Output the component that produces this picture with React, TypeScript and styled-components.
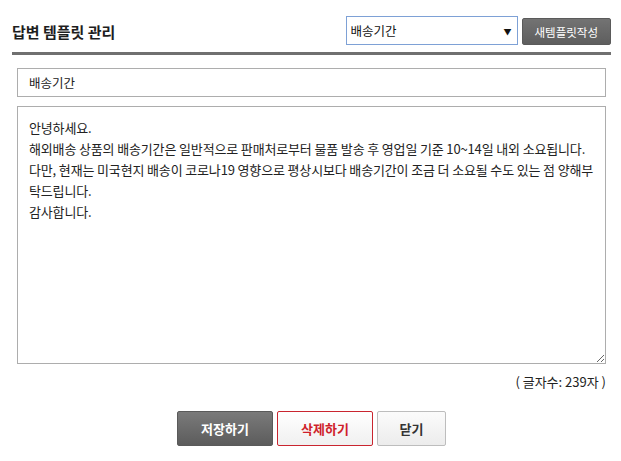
import React, { useState } from 'react';
import styled, { createGlobalStyle } from 'styled-components';

const GlobalStyle = createGlobalStyle`
  html, body {
    margin: 0;
    padding: 0;
    background: #fff;
  }
  body {
    font-family: 'Noto Sans CJK KR', 'Noto Sans', sans-serif;
    color: #222;
  }
`;

const Page = styled.div`
  width: 599px;
  padding: 16px 10px 0 12px;
`;

const Header = styled.div`
  display: flex;
  align-items: center;
  justify-content: space-between;
  padding-bottom: 7px;
  border-bottom: 3px solid #707070;
`;

const Title = styled.h1`
  margin: 0;
  padding-top: 1px;
  font-size: 15px;
  font-weight: 700;
  color: #1e1e1e;
`;

const Tools = styled.div`
  display: flex;
  align-items: center;
  gap: 4px;
`;

const SelectWrap = styled.div`
  position: relative;
  width: 172px;
  height: 29px;
`;

const Select = styled.select`
  appearance: none;
  width: 100%;
  height: 100%;
  padding: 0 20px 0 4px;
  border: 1px solid #7ea1d6;
  border-radius: 0;
  background: #fff;
  font-family: inherit;
  font-size: 12.5px;
  color: #111;
  outline: none;
`;

const Arrow = styled.span`
  position: absolute;
  right: 6px;
  top: 50%;
  transform: translateY(-50%);
  font-size: 8px;
  color: #111;
  pointer-events: none;
`;

const NewButton = styled.button`
  height: 27px;
  margin-top: 2px;
  padding: 0 12px;
  border: 1px solid #5a5a5a;
  border-radius: 2px;
  background: linear-gradient(#737373, #5e5e5e);
  color: #fff;
  font-family: inherit;
  font-size: 11.5px;
  cursor: pointer;
`;

const Body = styled.div`
  display: flex;
  flex-direction: column;
  padding: 13px 5px 0;
`;

const TitleInput = styled.input`
  box-sizing: border-box;
  height: 29px;
  padding: 0 11px;
  border: 1px solid #adadad;
  font-family: inherit;
  font-size: 12.5px;
  color: #222;
  outline: none;
`;

const Content = styled.textarea`
  box-sizing: border-box;
  height: 258px;
  margin-top: 9px;
  padding: 10px 6px 10px 11px;
  border: 1px solid #adadad;
  font-family: inherit;
  font-size: 13px;
  line-height: 21px;
  letter-spacing: -0.15px;
  color: #222;
  outline: none;
`;

const Count = styled.div`
  margin-top: 8px;
  text-align: right;
  font-size: 13px;
  color: #222;
`;

const Actions = styled.div`
  display: flex;
  justify-content: center;
  gap: 4px;
  margin-top: 20px;
`;

const variants = {
  dark: { bg: 'linear-gradient(#7a7a7a, #5c5c5c)', border: '#5a5a5a', color: '#fff' },
  danger: { bg: 'linear-gradient(#ffffff, #f0f0f0)', border: '#c9252f', color: '#cf1f2c' },
  plain: { bg: 'linear-gradient(#fbfbfb, #ececec)', border: '#bdbdbd', color: '#333' },
};

const ActionButton = styled.button<{ $variant: keyof typeof variants; $w: number }>`
  width: ${(p) => p.$w}px;
  height: 35px;
  border: 1px solid ${(p) => variants[p.$variant].border};
  border-radius: 2px;
  background: ${(p) => variants[p.$variant].bg};
  color: ${(p) => variants[p.$variant].color};
  font-family: inherit;
  font-size: 13px;
  font-weight: 700;
  cursor: pointer;
`;

const initialText =
  '안녕하세요.\n해외배송 상품의 배송기간은 일반적으로 판매처로부터 물품 발송 후 영업일 기준 10~14일 내외 소요됩니다.\n다만, 현재는 미국현지 배송이 코로나19 영향으로 평상시보다 배송기간이 조금 더 소요될 수도 있는 점 양해부탁드립니다.\n감사합니다.';

export default function App() {
  const [name, setName] = useState('배송기간');
  const [text, setText] = useState(initialText);

  return (
    <>
      <GlobalStyle />
      <Page>
        <Header>
          <Title>답변 템플릿 관리</Title>
          <Tools>
            <SelectWrap>
              <Select defaultValue="배송기간">
                <option>배송기간</option>
              </Select>
              <Arrow>▼</Arrow>
            </SelectWrap>
            <NewButton>새템플릿작성</NewButton>
          </Tools>
        </Header>
        <Body>
          <TitleInput value={name} onChange={(e) => setName(e.target.value)} />
          <Content value={text} onChange={(e) => setText(e.target.value)} />
          <Count>( 글자수: 239자 )</Count>
          <Actions>
            <ActionButton $variant="dark" $w={96}>저장하기</ActionButton>
            <ActionButton $variant="danger" $w={96}>삭제하기</ActionButton>
            <ActionButton $variant="plain" $w={69}>닫기</ActionButton>
          </Actions>
        </Body>
      </Page>
    </>
  );
}
